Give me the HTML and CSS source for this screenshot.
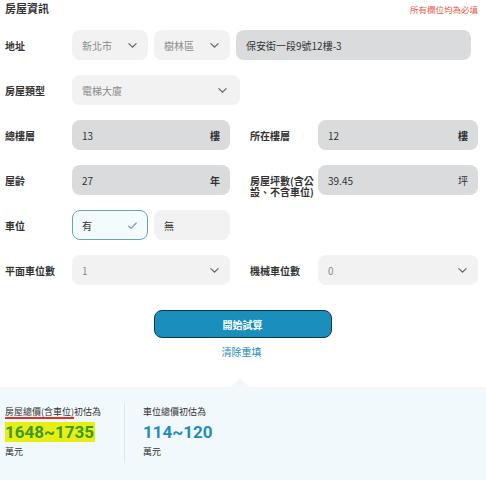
FILE: index.html
```html
<!DOCTYPE html>
<html lang="zh-Hant">
<head>
<meta charset="utf-8">
<link rel="stylesheet" href="styles.css">
</head>
<body>
<div class="page">
  <div class="head">
    <h1 class="title">房屋資訊</h1>
    <span class="required">所有欄位均為必填</span>
  </div>

  <div class="row">
    <div class="label">地址</div>
    <div class="addr">
      <div class="field select sm"><span>新北市</span><svg class="chev" viewBox="0 0 12 8"><path d="M1.5 1.5 L6 6 L10.5 1.5"/></svg></div>
      <div class="field select sm"><span>樹林區</span><svg class="chev" viewBox="0 0 12 8"><path d="M1.5 1.5 L6 6 L10.5 1.5"/></svg></div>
      <div class="field ro addr-text"><span>保安街一段9號12樓-3</span></div>
    </div>
  </div>

  <div class="row">
    <div class="label">房屋類型</div>
    <div class="field select type"><span>電梯大廈</span><svg class="chev" viewBox="0 0 12 8"><path d="M1.5 1.5 L6 6 L10.5 1.5"/></svg></div>
  </div>

  <div class="row two">
    <div class="label">總樓層</div>
    <div class="field ro"><span>13</span><b class="unit">樓</b></div>
    <div class="label rlabel">所在樓層</div>
    <div class="field ro"><span>12</span><b class="unit">樓</b></div>
  </div>

  <div class="row two">
    <div class="label">屋齡</div>
    <div class="field ro"><span>27</span><b class="unit">年</b></div>
    <div class="label rlabel tall">房屋坪數(含公設、不含車位)</div>
    <div class="field ro"><span>39.45</span><b class="unit light">坪</b></div>
  </div>

  <div class="row">
    <div class="label">車位</div>
    <div class="opts">
      <div class="field opt on"><span>有</span><svg class="check" viewBox="0 0 12 10"><path d="M1.5 5.5 L4.5 8.2 L10.5 1.8"/></svg></div>
      <div class="field opt"><span>無</span></div>
    </div>
  </div>

  <div class="row two">
    <div class="label">平面車位數</div>
    <div class="field select"><span>1</span><svg class="chev" viewBox="0 0 12 8"><path d="M1.5 1.5 L6 6 L10.5 1.5"/></svg></div>
    <div class="label rlabel">機械車位數</div>
    <div class="field select"><span>0</span><svg class="chev" viewBox="0 0 12 8"><path d="M1.5 1.5 L6 6 L10.5 1.5"/></svg></div>
  </div>

  <div class="actions">
    <button class="btn">開始試算</button>
    <a class="reset">清除重填</a>
  </div>
</div>

<div class="result">
  <div class="col">
    <div class="rt"><span class="ul">房屋總價(含車位)</span>初估為</div>
    <div class="num green"><mark>1648~1735</mark></div>
    <div class="rt">萬元</div>
  </div>
  <div class="divider"></div>
  <div class="col">
    <div class="rt">車位總價初估為</div>
    <div class="num blue">114~120</div>
    <div class="rt">萬元</div>
  </div>
</div>
</body>
</html>
```

FILE: styles.css
```css
* { box-sizing: border-box; }
html, body { margin: 0; padding: 0; background: #fff; }
body {
  font-family: "Noto Sans CJK TC", "Noto Sans", "Liberation Sans", sans-serif;
  color: #333;
  width: 486px;
  height: 480px;
  overflow: hidden;
}
.page { padding: 0 8px 0 5px; }
.head {
  display: flex;
  justify-content: space-between;
  align-items: center;
  height: 17px;
  margin-top: 0;
}
.title { margin: 0; font-size: 11px; font-weight: 700; color: #333; line-height: 17px; }
.required { font-size: 8.5px; color: #e8594a; margin-top: 1px; }

.row {
  display: flex;
  align-items: center;
  height: 30px;
  margin-top: 13px;
}
.row + .row { margin-top: 15px; }
.label {
  width: 67px;
  flex: none;
  font-size: 10px;
  font-weight: 700;
  color: #333;
}
.rlabel { width: 68px; margin-left: 20px; }
.rlabel.tall { line-height: 11px; font-size: 10px; font-weight: 600; padding-top: 11px; width: 68px; padding-right: 4px; }
.field {
  height: 30px;
  border-radius: 8px;
  background: #f2f2f3;
  display: flex;
  align-items: center;
  justify-content: space-between;
  padding: 0 10px;
  font-size: 10px;
  flex: none;
}
.two .field { width: 158px; }
.two .field:last-child { width: 160px; }
.select span { color: #8a8a8a; }
.chev { width: 11px; height: 7px; fill: none; stroke: #666; stroke-width: 1.4; }
.ro { background: #dadbdd; color: #333; }
.unit { font-weight: 700; font-size: 10px; color: #333; }
.unit.light { font-weight: 400; }
.addr { display: flex; gap: 6px; }
.sm { width: 76px; }
.addr-text { width: 235px; justify-content: flex-start; font-size: 10px; }
.type { width: 168px; padding-right: 12px; }
.opts { display: flex; gap: 6px; }
.opt { width: 76px; color: #333; }
.opt.on { background: #f4fbfd; border: 1px solid #6aa3b4; padding: 0 9px; }
.check { width: 11px; height: 9px; fill: none; stroke: #6aa3b4; stroke-width: 1.5; }

.actions {
  display: flex;
  flex-direction: column;
  align-items: center;
  margin-top: 25px;
}
.btn {
  width: 178px;
  height: 28px;
  border-radius: 8px;
  border: 1.5px solid #0d3a4d;
  background: #1a8fbd;
  color: #fff;
  font-family: inherit;
  font-size: 10px;
  font-weight: 700;
  padding: 0;
  margin-left: 2px;
}
.reset { font-size: 10px; color: #1f8dbb; margin-top: 6px; line-height: 16px; }

.result {
  position: relative;
  margin-top: 27px;
  background: #f1f9fc;
  height: 94px;
  display: flex;
  padding: 18px 0 0 5px;
}
.result::before {
  content: "";
  position: absolute;
  left: 231px;
  top: -9px;
  border-left: 9px solid transparent;
  border-right: 9px solid transparent;
  border-bottom: 9px solid #f1f9fc;
}
.col { display: flex; flex-direction: column; }
.col:first-child { width: 119px; }
.rt { font-size: 9px; color: #333; line-height: 14px; }
.ul { text-decoration: underline; text-decoration-color: #e0302a; text-decoration-thickness: 1.5px; text-underline-offset: 2px; }
.num { font-family: "Roboto", "Liberation Sans", sans-serif; font-size: 17px; font-weight: 700; line-height: 22px; margin: 2px 0; }
.green mark { background: #e6ee14; color: #3c9a25; padding: 0 1px 0 0; }
.blue { color: #1f8dbb; }
.divider { width: 1px; background: #e1e6e9; height: 60px; margin: -2px 18px 0 0; }
```
